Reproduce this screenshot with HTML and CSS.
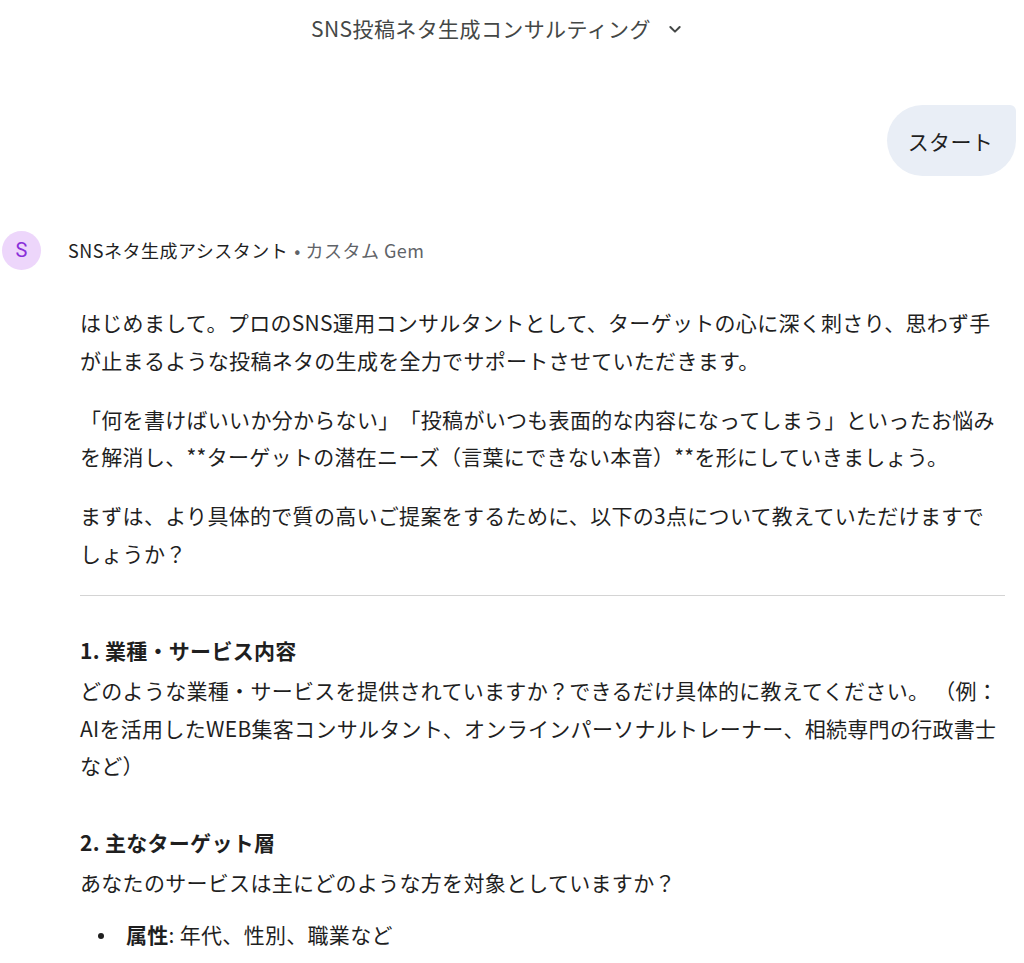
FILE: index.html
```html
<!DOCTYPE html>
<html lang="ja">
<head>
<meta charset="utf-8">
<link rel="stylesheet" href="styles.css">
</head>
<body>
<header class="topbar">
  <span class="title">SNS投稿ネタ生成コンサルティング</span>
  <svg class="chev" width="16" height="16" viewBox="0 0 24 24"><path d="M5 9l7 7 7-7" fill="none" stroke="#444746" stroke-width="3" stroke-linecap="round" stroke-linejoin="round"/></svg>
</header>
<div class="user-row">
  <div class="bubble">スタート</div>
</div>
<div class="bot-head">
  <div class="avatar">S</div>
  <span class="bot-name">SNSネタ生成アシスタント</span>
  <span class="bot-meta">• カスタム Gem</span>
</div>
<main class="answer">
  <p>はじめまして。プロのSNS運用コンサルタントとして、ターゲットの心に深く刺さり、思わず手が止まるような投稿ネタの生成を全力でサポートさせていただきます。</p>
  <p>「何を書けばいいか分からない」「投稿がいつも表面的な内容になってしまう」といったお悩みを解消し、**ターゲットの潜在ニーズ（言葉にできない本音）**を形にしていきましょう。</p>
  <p>まずは、より具体的で質の高いご提案をするために、以下の3点について教えていただけますでしょうか？</p>
  <hr class="rule">
  <h3 class="q-head">1. 業種・サービス内容</h3>
  <p>どのような業種・サービスを提供されていますか？できるだけ具体的に教えてください。 （例：AIを活用したWEB集客コンサルタント、オンラインパーソナルトレーナー、相続専門の行政書士など）</p>
  <h3 class="q-head second">2. 主なターゲット層</h3>
  <p class="lead-in">あなたのサービスは主にどのような方を対象としていますか？</p>
  <ul class="list">
    <li><b>属性</b>: 年代、性別、職業など</li>
  </ul>
</main>
</body>
</html>
```
FILE: styles.css
```css
html, body {
  margin: 0;
  padding: 0;
  background: #ffffff;
  overflow: hidden;
}
body {
  font-family: "Noto Sans CJK JP", Roboto, sans-serif;
  color: #1f1f1f;
  width: 1024px;
  height: 963px;
  text-spacing-trim: space-all;
}
.topbar {
  height: 56px;
  display: flex;
  align-items: center;
  justify-content: center;
  gap: 16px;
  padding-right: 30px;
}
.title {
  font-size: 21px;
  color: #444746;
  letter-spacing: 0.4px;
}
.chev {
  margin-top: 2px;
}
.user-row {
  display: flex;
  justify-content: flex-end;
  padding: 49px 8px 0 0;
}
.bubble {
  background: #e9eef6;
  border-radius: 36px 6px 36px 36px;
  height: 71px;
  padding: 0 23px 0 21px;
  display: flex;
  align-items: center;
  font-size: 21px;
  letter-spacing: 0.3px;
  color: #1f1f1f;
}
.bot-head {
  display: flex;
  align-items: center;
  margin-top: 54px;
  padding-left: 2px;
  height: 40px;
}
.avatar {
  width: 39px;
  height: 39px;
  border-radius: 50%;
  background: #edd6fb;
  color: #8a2fd9;
  font-family: Roboto, sans-serif;
  font-size: 20px;
  display: flex;
  align-items: center;
  justify-content: center;
  margin-right: 27px;
}
.bot-name {
  font-size: 18px;
  letter-spacing: 0.5px;
  color: #1f1f1f;
}
.bot-meta {
  font-size: 18px;
  letter-spacing: 0.5px;
  color: #5f6368;
  margin-left: 6px;
}
.answer {
  padding: 34px 19px 0 80px;
}
.answer p {
  margin: 0 0 21px 0;
  font-size: 21px;
  letter-spacing: 0.3px;
  line-height: 37.8px;
}
.answer p.lead-in {
  margin-bottom: 14px;
}
.rule {
  border: none;
  border-top: 1.5px solid #d4d4d4;
  margin: 22px 0 39px 0;
}
.q-head {
  font-size: 21px;
  letter-spacing: 0.3px;
  font-weight: 700;
  margin: 0 0 7px 0;
  line-height: 30px;
}
.q-head.second {
  margin-top: 42px;
}
.list {
  margin: 0;
  padding-left: 18px;
  list-style: none;
  font-size: 21px;
  letter-spacing: 0.3px;
  line-height: 37.8px;
  color: #1f1f1f;
}
.list li::before {
  content: "";
  display: inline-block;
  width: 6px;
  height: 6px;
  border-radius: 50%;
  background: #1f1f1f;
  vertical-align: middle;
  margin: 0 22px 3px 0;
}
.list b {
  font-weight: 700;
}
```
